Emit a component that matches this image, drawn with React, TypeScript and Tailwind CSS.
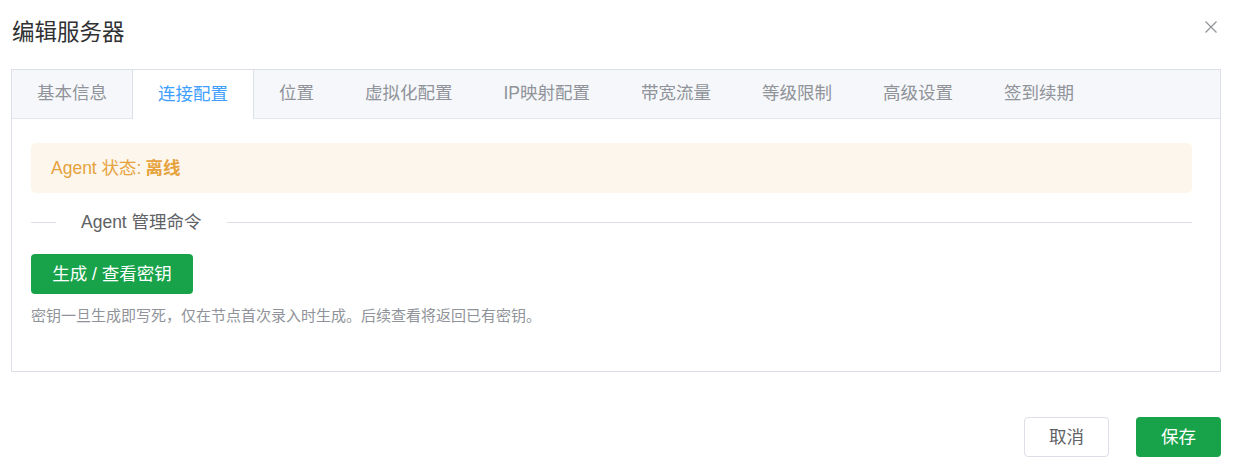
import React from 'react';

const tabs = ['基本信息', '连接配置', '位置', '虚拟化配置', 'IP映射配置', '带宽流量', '等级限制', '高级设置', '签到续期'];

const App: React.FC = () => {
  const active = 1;

  return (
    <div className="relative w-[1238px] h-[473px] bg-white text-[#303133] font-['Liberation_Sans','Noto_Sans_CJK_SC',sans-serif] overflow-hidden">
      {/* Header */}
      <div className="px-[12px] pt-[18px] pb-[21px]">
        <h2 className="text-[22.5px] leading-[30px] font-normal text-[#303133]">编辑服务器</h2>
      </div>
      <button className="absolute top-[21px] right-[21px] w-[12px] h-[12px]">
        <svg viewBox="0 0 12 12" className="w-[12px] h-[12px]">
          <path d="M0.5 0.5 L11.5 11.5 M11.5 0.5 L0.5 11.5" stroke="#909399" strokeWidth="1.2" fill="none" />
        </svg>
      </button>

      {/* Tabs card */}
      <div className="ml-[11px] w-[1210px] border border-[#dcdfe6] bg-white">
        <div className="flex h-[49px] bg-[#f5f7fa] border-b border-[#e4e7ed]">
          {tabs.map((t, i) => (
            <div
              key={t}
              className={
                i === active
                  ? 'relative -ml-px h-[49px] px-[25px] flex items-center border-x border-[#dcdfe6] bg-white text-[#409eff] text-[17.5px] leading-none'
                  : '-ml-px h-[48px] px-[25px] flex items-center border-x border-transparent text-[#909399] text-[17.5px] leading-none'
              }
            >
              {t}
            </div>
          ))}
        </div>

        <div className="pt-[24px] pl-[19px] pr-[28px] pb-[45px]">
          {/* Alert */}
          <div className="h-[50px] rounded-[5px] bg-[#fdf6ec] px-[20px] flex items-center text-[17.5px] text-[#e6a23c]">
            <span>Agent 状态: </span>
            <span className="font-bold ml-[4px]">离线</span>
          </div>

          {/* Divider */}
          <div className="flex items-center mt-[29px] h-[1px]">
            <div className="w-[25px] h-px bg-[#dcdfe6]" />
            <span className="px-[25px] text-[17.5px] text-[#606266] whitespace-nowrap">Agent 管理命令</span>
            <div className="flex-1 h-px bg-[#dcdfe6]" />
          </div>

          {/* Button */}
          <button className="mt-[31px] h-[40px] w-[162px] rounded-[4px] bg-[#18a34a] text-white text-[17.5px] flex items-center justify-center">
            生成 / 查看密钥
          </button>

          <p className="mt-[12px] text-[15px] leading-[20px] text-[#909399]">
            密钥一旦生成即写死，仅在节点首次录入时生成。后续查看将返回已有密钥。
          </p>
        </div>
      </div>

      {/* Footer */}
      <div className="flex justify-end gap-[27px] pr-[17px] mt-[45px]">
        <button className="w-[85px] h-[40px] rounded-[4px] border border-[#dcdfe6] bg-white text-[#606266] text-[17.5px]">
          取消
        </button>
        <button className="w-[85px] h-[40px] rounded-[4px] bg-[#18a34a] text-white text-[17.5px]">
          保存
        </button>
      </div>
    </div>
  );
};

export default App;
